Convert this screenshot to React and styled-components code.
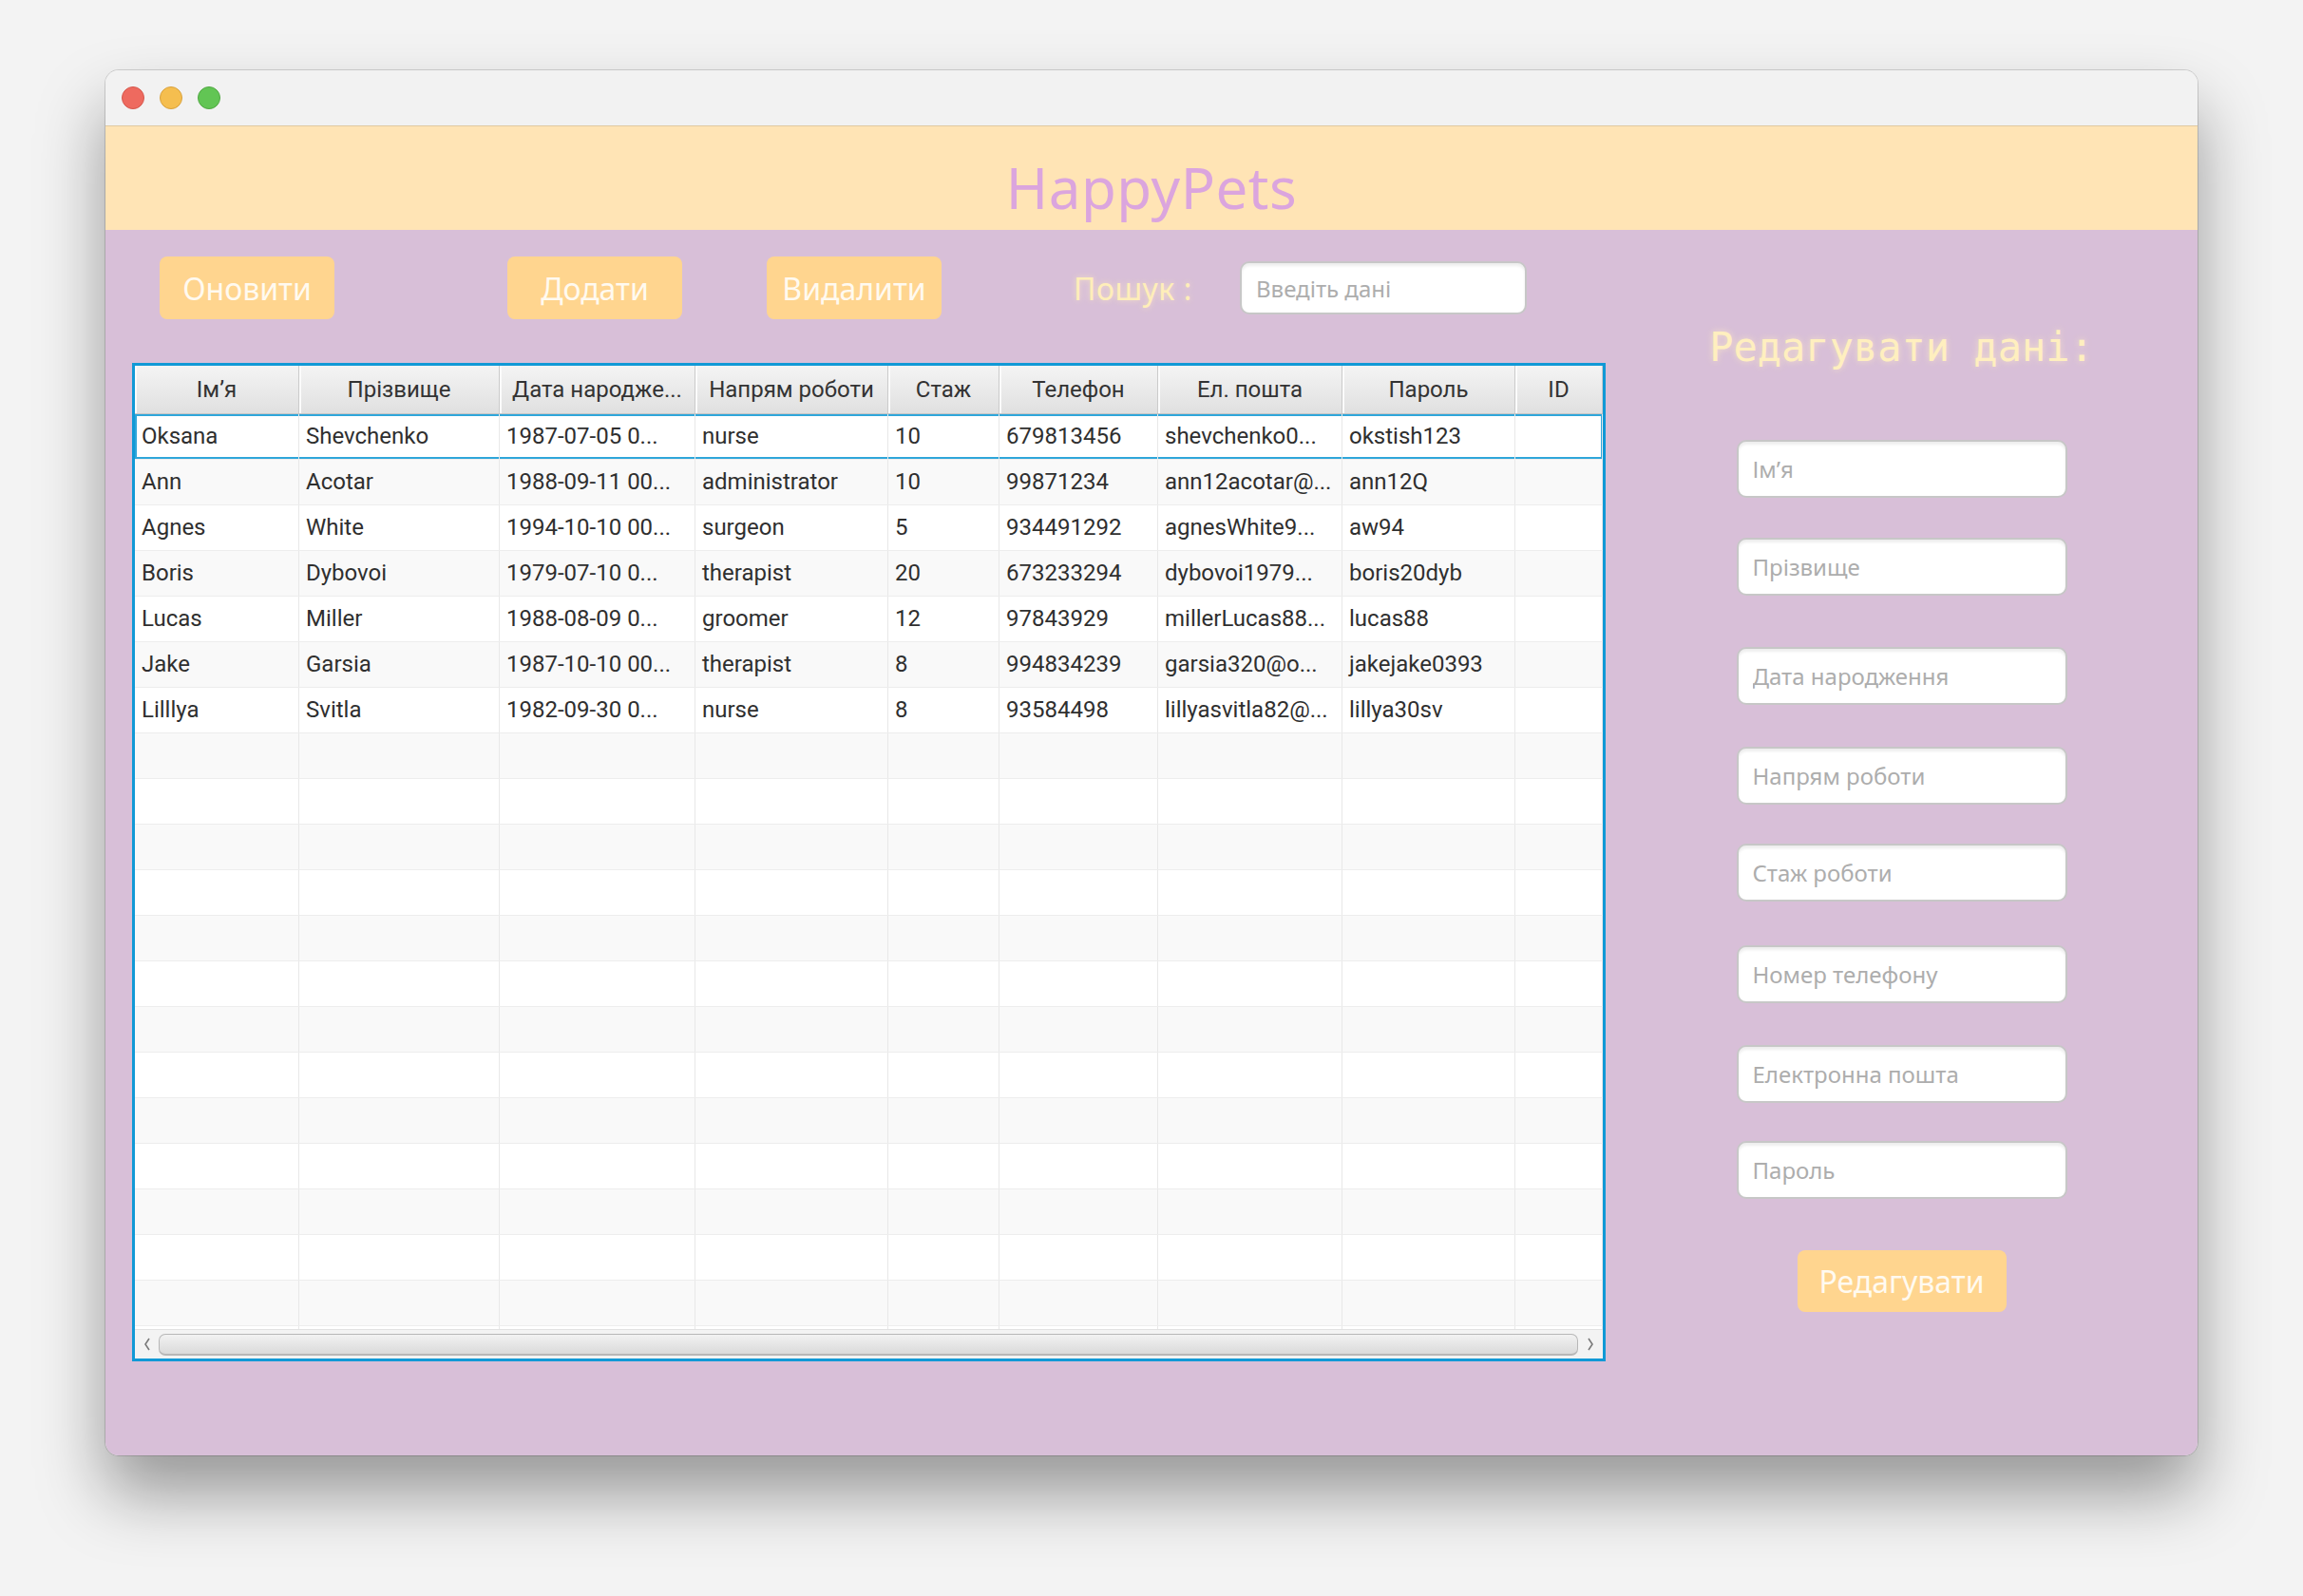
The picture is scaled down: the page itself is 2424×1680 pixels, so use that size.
import React from 'react';
import styled, { createGlobalStyle } from 'styled-components';

const GlobalStyle = createGlobalStyle`
  html, body {
    margin: 0;
    padding: 0;
  }
  body {
    width: 2424px;
    height: 1680px;
    overflow: hidden;
    background: #f3f3f3;
    font-family: "Noto Sans", sans-serif;
  }
  * { box-sizing: border-box; }
`;

const Window = styled.div`
  margin: 74px 0 0 111px;
  width: 2202px;
  height: 1458px;
  border-radius: 14px;
  overflow: hidden;
  display: flex;
  flex-direction: column;
  box-shadow: 0 40px 70px rgba(0, 0, 0, 0.38), 0 0 0 1px rgba(0, 0, 0, 0.14);
`;

const TitleBar = styled.div`
  height: 59px;
  flex-shrink: 0;
  background: #f2f2f2;
  border-bottom: 1px solid #dfc9a2;
  display: flex;
  align-items: center;
  gap: 16px;
  padding-left: 17px;
`;

const Light = styled.span`
  width: 24px;
  height: 24px;
  border-radius: 50%;
  background: ${(p) => p.$color};
  border: 1px solid ${(p) => p.$edge};
`;

const Header = styled.header`
  height: 109px;
  flex-shrink: 0;
  background: #ffe4b5;
  display: flex;
  justify-content: center;
  padding-top: 34px;
`;

const Logo = styled.h1`
  margin: 0;
  font-family: "Noto Sans", sans-serif;
  font-weight: 400;
  font-size: 60px;
  line-height: 60px;
  height: 60px;
  color: #dba5de;
  letter-spacing: 0.5px;
`;

const Main = styled.main`
  flex: 1;
  background: #d8bfd8;
  display: flex;
`;

const LeftColumn = styled.section`
  width: 1579px;
  padding: 28px 0 0 28px;
  display: flex;
  flex-direction: column;
`;

const Toolbar = styled.div`
  height: 66px;
  display: flex;
  align-items: center;
`;

const ActionButton = styled.button`
  margin-left: ${(p) => p.$ml || 0}px;
  margin-top: ${(p) => p.$mt || 0}px;
  width: ${(p) => p.$w || 184}px;
  height: ${(p) => p.$h || 66}px;
  flex-shrink: 0;
  border: none;
  border-radius: 8px;
  background: #ffd58f;
  color: #fffaf0;
  font-family: "Noto Sans", sans-serif;
  font-size: 32px;
  padding: 0;
  cursor: pointer;
`;

const SearchLabel = styled.span`
  margin-left: 139px;
  width: 175px;
  flex-shrink: 0;
  font-size: 32px;
  color: #ffeeb9;
  text-shadow: 0 0 6px rgba(255, 238, 190, 0.75);
  letter-spacing: 0.5px;
`;

const TextField = styled.input`
  width: ${(p) => p.$w}px;
  height: ${(p) => p.$h}px;
  margin-top: ${(p) => p.$mt || 0}px;
  flex-shrink: 0;
  border: 2px solid #c7c7c7;
  border-radius: 10px;
  background: #fff;
  box-shadow: inset 0 3px 3px rgba(0, 0, 0, 0.07);
  padding: 0 15px;
  font-family: "Noto Sans", sans-serif;
  font-size: 24px;
  color: #333;
  outline: none;
  &::placeholder {
    color: #adadad;
  }
`;

const Table = styled.div`
  margin-top: 46px;
  width: 1551px;
  height: 1051px;
  border: 3px solid #1199d6;
  background: #fff;
  display: flex;
  flex-direction: column;
  overflow: hidden;
  font-family: Roboto, "Noto Sans", sans-serif;
`;

const columns = '173px 211px 206px 203px 117px 167px 194px 182px 92px';

const HeadRow = styled.div`
  display: grid;
  grid-template-columns: ${columns};
  height: 51px;
  flex-shrink: 0;
  border-bottom: 1px solid #c6c6c6;
`;

const HeadCell = styled.div`
  display: flex;
  align-items: center;
  justify-content: center;
  background: linear-gradient(#f4f4f4, #e0e0e0);
  border-right: 1px solid #cbcbcb;
  box-shadow: inset 2px 0 0 #fbfbfb;
  font-size: 24px;
  color: #333;
  white-space: nowrap;
  overflow: hidden;
`;

const Body = styled.div`
  flex: 1;
  overflow: hidden;
`;

const Row = styled.div`
  display: grid;
  grid-template-columns: ${columns};
  height: 48px;
  background: ${(p) => (p.$alt ? '#f9f9f9' : '#fff')};
  border-bottom: 1px solid #ededed;
  box-shadow: ${(p) => (p.$selected ? 'inset 0 0 0 2px #2fa6da' : 'none')};
`;

const Cell = styled.div`
  display: flex;
  align-items: center;
  padding: 0 7px 2px;
  border-right: 1px solid #e8e8e8;
  font-size: 24px;
  color: #2f2f2f;
  white-space: nowrap;
  overflow: hidden;
`;

const ScrollBar = styled.div`
  height: 31px;
  flex-shrink: 0;
  background: #f3f3f3;
  border-top: 1px solid #e2e2e2;
  display: flex;
  align-items: center;
`;

const Arrow = styled.div`
  width: ${(p) => p.$w}px;
  height: 100%;
  display: flex;
  align-items: center;
  justify-content: center;
  flex-shrink: 0;
`;

const Thumb = styled.div`
  flex: 1;
  height: 23px;
  border-radius: 7px;
  border: 1px solid #b7b7b7;
  border-bottom-width: 2px;
  background: linear-gradient(#f2f2f2, #dadada);
`;

const RightPanel = styled.aside`
  flex: 1;
  display: flex;
  flex-direction: column;
  align-items: center;
  padding-top: 99px;
`;

const PanelTitle = styled.h2`
  margin: 0;
  font-family: "DejaVu Sans Mono", "Liberation Mono", monospace;
  font-weight: 400;
  font-size: 42px;
  line-height: 50px;
  color: #ffefbf;
  text-shadow: 0 0 7px rgba(255, 238, 195, 0.75);
`;

const headers = ['Ім’я', 'Прізвище', 'Дата народже...', 'Напрям роботи', 'Стаж', 'Телефон', 'Ел. пошта', 'Пароль', 'ID'];

const rows = [
  ['Oksana', 'Shevchenko', '1987-07-05 0...', 'nurse', '10', '679813456', 'shevchenko0...', 'okstish123', ''],
  ['Ann', 'Acotar', '1988-09-11 00...', 'administrator', '10', '99871234', 'ann12acotar@...', 'ann12Q', ''],
  ['Agnes', 'White', '1994-10-10 00...', 'surgeon', '5', '934491292', 'agnesWhite9...', 'aw94', ''],
  ['Boris', 'Dybovoi', '1979-07-10 0...', 'therapist', '20', '673233294', 'dybovoi1979...', 'boris20dyb', ''],
  ['Lucas', 'Miller', '1988-08-09 0...', 'groomer', '12', '97843929', 'millerLucas88...', 'lucas88', ''],
  ['Jake', 'Garsia', '1987-10-10 00...', 'therapist', '8', '994834239', 'garsia320@o...', 'jakejake0393', ''],
  ['Lilllya', 'Svitla', '1982-09-30 0...', 'nurse', '8', '93584498', 'lillyasvitla82@...', 'lillya30sv', ''],
];

const TOTAL_ROWS = 21;

const fields = [
  { ph: 'Ім’я', mt: 72 },
  { ph: 'Прізвище', mt: 42 },
  { ph: 'Дата народження', mt: 54 },
  { ph: 'Напрям роботи', mt: 44 },
  { ph: 'Стаж роботи', mt: 41 },
  { ph: 'Номер телефону', mt: 46 },
  { ph: 'Електронна пошта', mt: 44 },
  { ph: 'Пароль', mt: 40 },
];

function Chevron({ dir }) {
  const d = dir === 'left' ? 'M7 2 L3 8 L7 14' : 'M3 2 L7 8 L3 14';
  return (
    <svg width="10" height="16" viewBox="0 0 10 16">
      <path d={d} fill="none" stroke="#7a7a7a" strokeWidth="1.6" />
    </svg>
  );
}

function StaffTable() {
  const body = [];
  for (let i = 0; i < TOTAL_ROWS; i++) {
    const data = rows[i] || headers.map(() => '');
    body.push(
      <Row key={i} $alt={i % 2 === 1} $selected={i === 0}>
        {data.map((v, j) => (
          <Cell key={j}>{v}</Cell>
        ))}
      </Row>
    );
  }
  return (
    <Table>
      <HeadRow>
        {headers.map((h) => (
          <HeadCell key={h}>{h}</HeadCell>
        ))}
      </HeadRow>
      <Body>{body}</Body>
      <ScrollBar>
        <Arrow $w={25}>
          <Chevron dir="left" />
        </Arrow>
        <Thumb />
        <Arrow $w={26}>
          <Chevron dir="right" />
        </Arrow>
      </ScrollBar>
    </Table>
  );
}

export default function App() {
  return (
    <>
      <GlobalStyle />
      <Window>
        <TitleBar>
          <Light $color="#ee6a5f" $edge="#d6574c" />
          <Light $color="#f5be4f" $edge="#d9a13c" />
          <Light $color="#62c554" $edge="#50a842" />
        </TitleBar>
        <Header>
          <Logo>HappyPets</Logo>
        </Header>
        <Main>
          <LeftColumn>
            <Toolbar>
              <ActionButton $ml={29}>Оновити</ActionButton>
              <ActionButton $ml={182}>Додати</ActionButton>
              <ActionButton $ml={89}>Видалити</ActionButton>
              <SearchLabel>Пошук :</SearchLabel>
              <TextField $w={302} $h={56} placeholder="Введіть дані" />
            </Toolbar>
            <StaffTable />
          </LeftColumn>
          <RightPanel>
            <PanelTitle>Редагувати дані:</PanelTitle>
            {fields.map((f) => (
              <TextField key={f.ph} $w={348} $h={61} $mt={f.mt} placeholder={f.ph} />
            ))}
            <ActionButton $w={220} $h={65} $mt={54}>
              Редагувати
            </ActionButton>
          </RightPanel>
        </Main>
      </Window>
    </>
  );
}
